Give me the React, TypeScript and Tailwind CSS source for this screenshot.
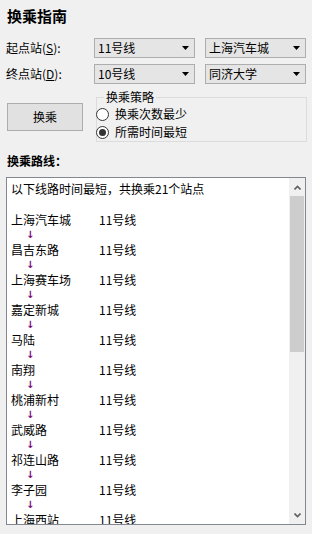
import React from "react";

const stations = [
  "上海汽车城",
  "昌吉东路",
  "上海赛车场",
  "嘉定新城",
  "马陆",
  "南翔",
  "桃浦新村",
  "武威路",
  "祁连山路",
  "李子园",
  "上海西站",
];

function Combo({ value }: { value: string }) {
  return (
    <div className="w-[101px] h-[20px] border border-[#adadad] bg-[#e5e5e5] flex items-center justify-between pl-[3px] pr-[5px]">
      <span className="leading-[18px]">{value}</span>
      <svg width="7" height="4" viewBox="0 0 7 4">
        <polygon points="0,0 7,0 3.5,4" fill="#000" />
      </svg>
    </div>
  );
}

function Radio({ label, checked }: { label: string; checked?: boolean }) {
  return (
    <div className="h-[18px] flex items-center">
      <div className="-ml-[1px] w-[13px] h-[13px] rounded-full border border-[#333] bg-white flex items-center justify-center">
        {checked && <div className="w-[7px] h-[7px] rounded-full bg-[#333]" />}
      </div>
      <span className="ml-[6px] leading-[18px]">{label}</span>
    </div>
  );
}

export default function App() {
  return (
    <div className="w-[312px] h-[534px] bg-[#f0f0f0] overflow-hidden text-[12px] text-black font-['Noto_Sans_CJK_SC','Microsoft_YaHei',sans-serif]">
      {/* Title */}
      <div className="pl-[7px] pt-[6px] h-[25px] leading-[19px] text-[15px] font-bold">换乘指南</div>

      {/* Start / end stations */}
      <div className="mt-[13px] h-[20px] flex items-center">
        <div className="w-[94px] pl-[6px]">
          起点站(<span className="underline">S</span>):
        </div>
        <Combo value="11号线" />
        <div className="ml-[10px]">
          <Combo value="上海汽车城" />
        </div>
      </div>
      <div className="mt-[6px] h-[20px] flex items-center">
        <div className="w-[94px] pl-[6px]">
          终点站(<span className="underline">D</span>):
        </div>
        <Combo value="10号线" />
        <div className="ml-[10px]">
          <Combo value="同济大学" />
        </div>
      </div>

      {/* Button + strategy */}
      <div className="mt-[6px] flex items-start">
        <button className="ml-[7px] mt-[13px] w-[76px] h-[28px] border border-[#adadad] bg-[#e1e1e1] text-[12px]">
          换乘
        </button>
        <fieldset className="ml-[13px] w-[211px] border border-[#dcdcdc] pt-[1px]">
          <legend className="ml-[7px] px-[2px] leading-[14px]">换乘策略</legend>
          <Radio label="换乘次数最少" />
          <Radio label="所需时间最短" checked />
        </fieldset>
      </div>

      <div className="mt-[11px] pl-[7px] h-[16px] leading-[16px] font-bold">换乘路线：</div>

      {/* Route list */}
      <div className="mt-[8px] ml-[6px] w-[300px] h-[348px] border border-[#828790] flex">
        <div className="flex-1 bg-white overflow-hidden pl-[4px] pt-[3px]">
          <div className="h-[16px] leading-[16px]">以下线路时间最短，共换乘21个站点</div>
          <div className="h-[15px]" />
          {stations.map((s, i) => (
            <div key={s}>
              <div className="h-[16px] leading-[16px] flex">
                <span className="w-[88px]">{s}</span>
                <span>11号线</span>
              </div>
              {i < stations.length - 1 && (
                <div className="h-[14px] leading-[14px] pl-[15px] text-[10px] font-bold text-[#7a0a7a] font-['DejaVu_Sans',sans-serif]">
                  ↓
                </div>
              )}
            </div>
          ))}
        </div>
        <div className="w-[16px] bg-[#f0f0f0] flex flex-col">
          <div className="h-[18px] flex items-center justify-center">
            <svg width="7" height="5" viewBox="0 0 7 5">
              <polyline points="0.5,4.5 3.5,1.5 6.5,4.5" fill="none" stroke="#606060" strokeWidth="1.6" />
            </svg>
          </div>
          <div className="mx-[1px] h-[156px] bg-[#cdcdcd]" />
          <div className="flex-1" />
          <div className="h-[17px] flex items-center justify-center">
            <svg width="7" height="5" viewBox="0 0 7 5">
              <polyline points="0.5,0.5 3.5,3.5 6.5,0.5" fill="none" stroke="#606060" strokeWidth="1.6" />
            </svg>
          </div>
        </div>
      </div>
    </div>
  );
}
